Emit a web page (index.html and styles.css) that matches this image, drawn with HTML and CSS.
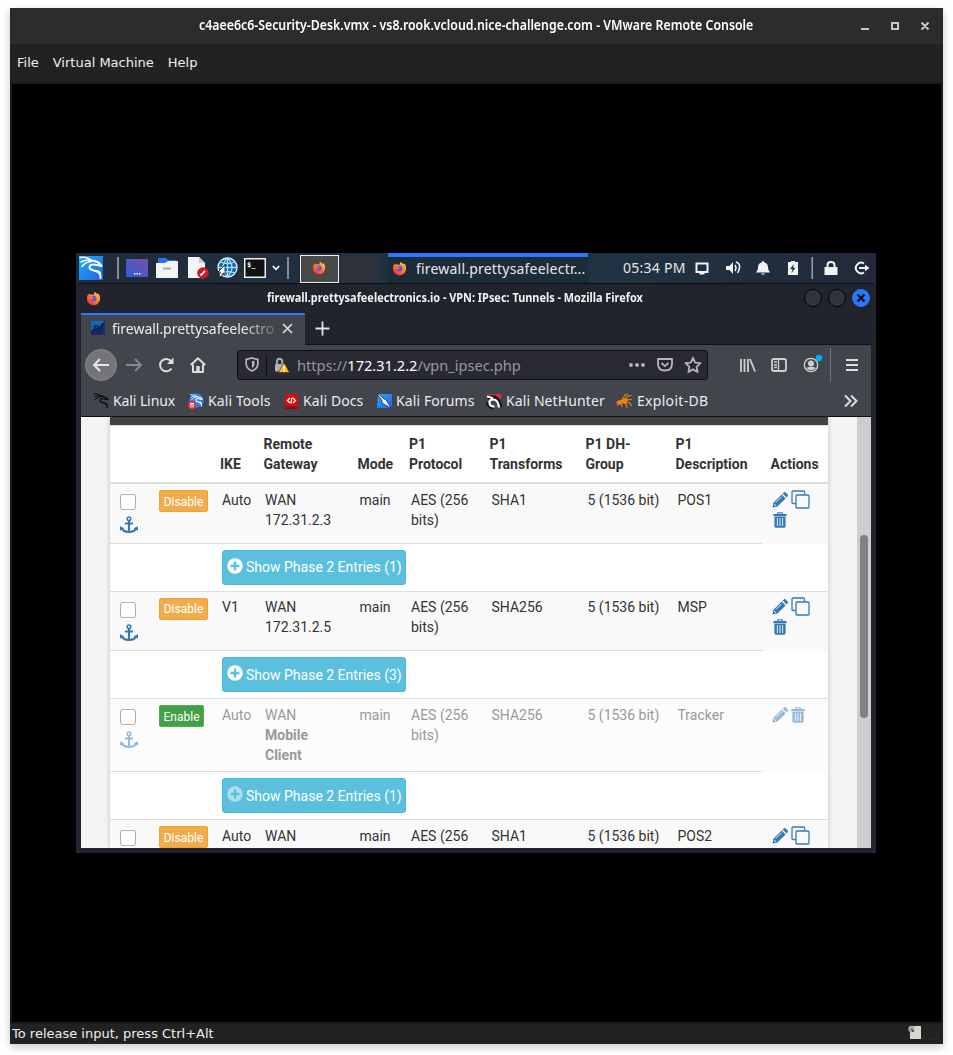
FILE: index.html
```
<!DOCTYPE html>
<html lang="en">
<head>
<meta charset="utf-8">
<title>VMware Remote Console</title>
<link rel="stylesheet" href="styles.css">
</head>
<body>
<svg class="defs" width="0" height="0">
  <defs>
    <linearGradient id="gBlue" x1="0" y1="0" x2="1" y2="1"><stop offset="0" stop-color="#1fb0f6"/><stop offset="1" stop-color="#2360e8"/></linearGradient>
    <linearGradient id="gDesk" x1="0" y1="1" x2="1" y2="0"><stop offset="0" stop-color="#2c5fd6"/><stop offset="1" stop-color="#7b4fa8"/></linearGradient>
    <linearGradient id="gFox" x1="1" y1="0" x2="0.2" y2="1"><stop offset="0" stop-color="#ffe14a"/><stop offset=".45" stop-color="#ff8a2a"/><stop offset="1" stop-color="#f5274f"/></linearGradient>
    <symbol id="fox" viewBox="0 0 16 16">
      <path fill="url(#gFox)" d="M9.500.8c.6 1.200 2 1.800 3 2.700l.6-.9c1.400 1.500 2 3.300 1.900 5.400A7 7 0 0 1 1 8.400C.9 6.200 1.600 4.300 2.700 2.900l.5 1.300 1.100-1.700.7 1.500c1.200-.3 2.300-.2 3.200.2C8.300 2.800 8.700 1.700 9.500.8z"/>
      <path fill="#5a54e6" d="M5.200 6.500l1.700-.3 1.300-1.300c1.800.3 3 1.700 3 3.400a3.300 3.300 0 0 1-6.500.4c.7.500 1.700.5 2.300-.1.700-.6 1.500-.5 1.700-1-.9-.9-2.200-.5-3.500-1.100z"/>
    </symbol>
    <symbol id="dragon" viewBox="0 0 24 24">
      <path fill="none" stroke="currentColor" stroke-width="1.500" stroke-linecap="round" d="M1 1.500c4-.5 8 0 11.500 3M2 6c3.500-2 7-2.300 10.500-1M3 10.500c2-3 5.500-4.500 9.500-5"/>
      <path fill="none" stroke="currentColor" stroke-width="2" stroke-linecap="round" stroke-linejoin="round" d="M12 4.500c3 0 5 1.200 7.500 2L22.500 10l-5-1c-3-1.200-7-.5-7 2.300 0 3.200 4 2.700 7.500 4.200 2.700 1.200 3.700 3.500 3.500 6.500M16 14.800c2-.2 4 .2 5 2"/>
    </symbol>
    <symbol id="pencil" viewBox="0 0 16 16"><path fill="currentColor" d="M.4 15.600l1.100-4.900L9.700 2.500l3.900 3.900-8.200 8.200zM10.600 1.600L11.900.4c.5-.5 1.200-.5 1.700 0l2.100 2.100c.5.500.5 1.200 0 1.700l-1.200 1.300z"/><path stroke="#f9f9f9" stroke-width=".9" d="M3.800 10.500L9.600 4.700M2 12l2 2"/></symbol>
    <symbol id="trash" viewBox="0 0 14 16"><path fill="currentColor" fill-rule="evenodd" d="M4.200 2V.8Q4.200.2 4.800.2h4.400q.6 0 .6.600V2h3.800v2H.4V2zm1.200 0h3.200v-.7H5.400zM1.400 4.600h11.200V14q0 1.700-1.500 1.700H2.900q-1.500 0-1.500-1.700z"/><path stroke="#f9f9f9" stroke-width=".9" d="M4.400 6v8M7 6v8M9.600 6v8"/></symbol>
    <symbol id="copy" viewBox="0 0 19 19"><path fill="none" stroke="currentColor" stroke-width="1.300" d="M4.500 13.500H2Q1 13.500 1 12.500V2Q1 1 2 1h10.500q1 0 1 1v2.500"/><rect x="5" y="5" width="13" height="13" rx="1" fill="none" stroke="currentColor" stroke-width="1.300"/></symbol>
    <symbol id="anchor" viewBox="0 0 18 18"><path fill="none" stroke="currentColor" stroke-width="2.100" d="M9 5v11.500M5 7.500h8M2 11.500c.4 3 3.500 4.500 7 4.500s6.600-1.500 7-4.500"/><circle cx="9" cy="2.700" r="1.800" fill="none" stroke="currentColor" stroke-width="1.500"/><path fill="currentColor" d="M0 14.500V10l4.400 3.200zM18 14.500V10l-4.400 3.200z"/></symbol>
    <symbol id="plus" viewBox="0 0 16 16"><circle cx="8" cy="8" r="7.700" fill="currentColor"/><path stroke="#5bc0de" stroke-width="2.400" d="M8 3.600v8.800M3.600 8h8.800"/></symbol>
  </defs>
</svg>

<main class="console">
  <header class="titlebar">
    <span class="title"><span class="squeeze">c4aee6c6-Security-Desk.vmx - vs8.rook.vcloud.nice-challenge.com - VMware Remote Console</span></span>
    <svg class="winbtns" width="72" height="12" viewBox="0 0 72 12"><path fill="#c8c8c8" d="M1 8h8v2H1z"/><path fill="none" stroke="#c8c8c8" stroke-width="2" d="M32 3h6v6h-6zM61.500 2.500l7 7M68.500 2.500l-7 7"/></svg>
  </header>
  <nav class="menubar"><span>File</span><span>Virtual Machine</span><span>Help</span></nav>

  <section class="screen">
    <div class="guest">
      <div class="panel">
        <svg class="p-kali" width="24" height="24" viewBox="0 0 24 24"><rect width="24" height="24" fill="url(#gBlue)"/><use href="#dragon" width="24" height="24" color="#fff"/></svg>
        <i class="sep"></i>
        <svg class="p-desk" width="22" height="18"><rect width="22" height="18" fill="url(#gDesk)"/><path fill="#fff" d="M8 14h1.500v1.500H8zM10.500 14H12v1.500h-1.500zM13 14h1.500v1.500H13z"/></svg>
        <svg class="p-files" width="22" height="20"><path fill="#2474f5" d="M2 0h8l2 2h8v8H2z"/><path fill="#f4f4f4" d="M0 5h9l3-2h10v17H0z"/><path stroke="#aaa" stroke-width="2" d="M7 10.500h8"/></svg>
        <svg class="p-edit" width="21" height="22"><path fill="#f4f4f4" d="M0 0h11l6 6v15H0z"/><path fill="#c9c9c9" d="M11 0v6h6z"/><circle cx="15" cy="16" r="5.800" fill="#d31822"/><path stroke="#fff" stroke-width="1.800" d="M12.500 18.500l4.500-4.500"/></svg>
        <svg class="p-web" width="21" height="22"><circle cx="10.500" cy="10.500" r="9.500" fill="#10669e" stroke="#dff4ff" stroke-width="1.300"/><path fill="none" stroke="#9fe0ff" stroke-width="1.300" d="M1 10.500h19M10.500 1v19M3 5q7.500 3 15 0M3 16q7.500-3 15 0M10.500 1q-9 9.500 0 19M10.500 1q9 9.500 0 19"/><path fill="#fff" stroke="#111" stroke-width=".8" d="M8 8v9.500l-2-1.500-2 4-2-1.500 1.500-3.500H1z"/></svg>
        <svg class="p-term" width="22" height="20"><rect x=".75" y=".75" width="20.500" height="18.500" fill="#111" stroke="#eee" stroke-width="1.500"/><text x="3" y="9" class="prompt">$_</text></svg>
        <svg class="p-chev" width="8" height="6"><path fill="none" stroke="#fff" stroke-width="1.600" d="M.8 1L4 4.300 7.200 1"/></svg>
        <i class="sep two"></i>
        <span class="launch"><svg width="14" height="14"><use href="#fox" width="14" height="14"/></svg></span>
        <span class="task"><svg width="15" height="15"><use href="#fox" width="15" height="15"/></svg><span>firewall.prettysafeelectr...</span></span>
        <span class="clock">05:34 PM</span>
        <svg class="tray" width="176" height="24" viewBox="0 0 176 24" fill="#f2f2f2">
          <path fill="none" stroke="#f2f2f2" stroke-width="2" d="M2.500 7.500h11v8.500h-11z"/><path d="M5.500 16h5v2.500h-5z"/>
          <path d="M32 10h3.500L39 6v12l-3.500-4H32z"/><path fill="none" stroke="#f2f2f2" stroke-width="1.500" d="M41 9q2 3 0 6M42 6q6.500 2 1.500 11"/>
          <path d="M62 16.500q2-2 2-5 0-4.500 4-5.300Q68 5 69 5t1 1.200q4 .8 4 5.300 0 3 2 5zM67 17.500h4q-2 2.400-4 0z"/>
          <path fill-rule="evenodd" d="M94 6h3V5h4v1h3v13H94zm6 2l-4 5h2.500l-1 4 4-5.200H99z"/>
          <path fill="#99a0aa" d="M117.500 1h1.500v22h-1.500z"/>
          <path d="M130.500 11h13v8h-13z"/><path fill="none" stroke="#f2f2f2" stroke-width="2" d="M133.500 12V9q0-3 3.500-3t3.500 3v3"/>
          <path fill="none" stroke="#f2f2f2" stroke-width="2" d="M170 7.500a5.300 5.300 0 1 0 0 9M165 12h8"/><path d="M171 8.800l4.500 3.200-4.500 3.200z"/>
        </svg>
      </div>

      <div class="browser">
        <div class="fx-title">
          <svg width="15" height="15"><use href="#fox" width="15" height="15"/></svg>
          <span class="fx-name"><span>firewall.prettysafeelectronics.io - VPN: IPsec: Tunnels - Mozilla Firefox</span></span>
          <span class="rounds"><i></i><i></i><i class="close"><svg width="10" height="10"><path stroke="#10131c" stroke-width="2.400" d="M1.500 1.500l7 7M8.500 1.500l-7 7"/></svg></i></span>
        </div>
        <div class="tabs">
          <div class="tab">
            <svg width="14" height="14"><rect width="14" height="14" fill="#1b2a78"/><path fill="#0d6bb5" d="M0 0h13L9 6 0 9z"/><path fill="none" stroke="#162043" stroke-width="1.700" d="M2 13l2-8h2q1.500 0 1 2T5 9H4M8 13l2-8q.6-2 3-1.500M8.500 7H12"/></svg>
            <span class="tab-name">firewall.prettysafeelectro</span>
            <svg width="11" height="11"><path stroke="#dedee0" stroke-width="1.700" d="M1 1l9 9M10 1l-9 9"/></svg>
          </div>
          <svg class="newtab" width="15" height="15"><path stroke="#e2e2e4" stroke-width="1.800" d="M7.500 .5v14M.5 7.500h14"/></svg>
        </div>
        <div class="navbar">
          <span class="back"><svg width="18" height="14"><path fill="none" stroke="#e6e6e6" stroke-width="2" d="M17 7H2M8 1L2 7l6 6"/></svg></span>
          <svg class="fwd" width="17" height="14"><path fill="none" stroke="#85888d" stroke-width="2" d="M0 7h15M9 1l6 6-6 6"/></svg>
          <svg class="reload" width="16" height="16"><path fill="none" stroke="#dedede" stroke-width="2" d="M13.500 11.500A6.200 6.200 0 1 1 13 4"/><path fill="#dedede" d="M15.500.5V7H9z"/></svg>
          <svg class="home" width="16" height="16"><path fill="none" stroke="#dedede" stroke-width="2" stroke-linejoin="round" d="M.8 8L8 1.300 15.200 8M3 7.500V15h10V7.500"/><path fill="#dedede" d="M6.300 9h3.400v6H6.300z"/></svg>
          <div class="url">
            <svg class="shield" width="14" height="15"><path fill="none" stroke="#b6b6ba" stroke-width="1.700" d="M7 1l5.800 1.500V7q0 4.500-5.800 7-5.800-2.500-5.800-7V2.500z"/><path fill="#b6b6ba" d="M7 4h2.500v4Q9.300 9.500 7 11z"/></svg>
            <i class="bar"></i>
            <svg class="lock" width="16" height="16"><rect x="1" y="7" width="9" height="7.500" rx="1" fill="#b0b0b4"/><path fill="none" stroke="#b0b0b4" stroke-width="1.900" d="M3 8V4.500q0-2.800 2.500-2.800T8.300 4.500V7"/><path fill="#ffbf14" stroke="#282933" stroke-width=".6" d="M10 5.500l5.500 10h-11z"/><path stroke="#fff" stroke-width="1.500" d="M10 9v3M10 13v1.300"/></svg>
            <span class="address">https://<b>172.31.2.2</b>/vpn_ipsec.php</span>
            <svg class="urlicons" width="75" height="18"><g fill="#b6b6ba"><circle cx="3" cy="9" r="1.900"/><circle cx="9" cy="9" r="1.900"/><circle cx="15" cy="9" r="1.900"/></g><path fill="none" stroke="#b6b6ba" stroke-width="1.800" stroke-linejoin="round" d="M30 3h14v5q0 6.500-7 6.500T30 8zM33.500 7l3.500 3.200L40.500 7M65 1.800l2.200 4.800 5.300.6-3.900 3.600 1 5.200-4.600-2.600-4.600 2.600 1-5.200-3.900-3.600 5.300-.6z"/></svg>
          </div>
          <svg class="tools" width="124" height="34" viewBox="0 0 124 34">
            <path stroke="#d0d0d2" stroke-width="1.800" d="M2 11v13M5.500 11v13M9 11v13M11 11l5 12.500"/>
            <rect x="33" y="11" width="14" height="12" rx="2" fill="none" stroke="#d0d0d2" stroke-width="1.800"/><path stroke="#d0d0d2" stroke-width="1.300" d="M39.500 11v12M35 14h3M35 17h3M35 19.500h3"/>
            <circle cx="72" cy="17" r="6.700" fill="none" stroke="#d0d0d2" stroke-width="1.300"/><circle cx="72" cy="15.500" r="3" fill="#d0d0d2"/><path fill="#d0d0d2" d="M67 20q5-2.500 10 0-5 4.500-10 0z"/><circle cx="80" cy="10" r="3.200" fill="#00b0f5"/>
            <path fill="#707379" d="M91 0h1v34h-1z"/><path fill="#dedee0" d="M107 11h12v2h-12zM107 16h12v2h-12zM107 21h12v2h-12z"/>
          </svg>
        </div>
        <div class="bookmarks">
          <svg width="16" height="16"><use href="#dragon" width="16" height="16" color="#0d0e10"/></svg><span class="b1">Kali Linux</span>
          <svg width="16" height="16"><circle cx="8.500" cy="7.500" r="7.200" fill="#2e7cf0"/><use href="#dragon" x="2" y="1" width="13" height="13" color="#fff"/><circle cx="4" cy="12" r="4" fill="#e63238"/><path fill="none" stroke="#fff" d="M2 10.500h4M3 10.500v4M5 10.500v4"/></svg><span class="b2">Kali Tools</span>
          <svg width="14" height="16"><path fill="#d50c12" d="M0 1h13v15H0z"/><path fill="#8c090e" d="M0 13.500h13V16H0z"/><path fill="none" stroke="#fff" stroke-width="1.300" d="M5 5L2.500 7.500 5 10M8 5l2.500 2.500L8 10M7 4.500L6 10.500"/></svg><span class="b3">Kali Docs</span>
          <svg width="16" height="16"><path fill="url(#gBlue)" d="M2 1h14v14H1z"/><path fill="#eef" stroke="#172037" stroke-width=".8" d="M.5.8l3 1 3.500 3.500 3 1.200 2 3.500 3.500 5.200-6-3-3-2-1.500-4z"/></svg><span class="b4">Kali Forums</span>
          <svg width="16" height="16"><path fill="#e22b31" d="M2 1h14l-3 9-4-4z"/><path fill="none" stroke="#15171c" stroke-width="3.600" d="M2 6q5-4 9 0t3 8M2 9q0 5 6 5.500"/><path fill="none" stroke="#fff" stroke-width="2.200" d="M13 14.500Q12 6.500 7.500 6.500T3.500 10q0 3 5 3.700M1 3.500l6 1.500"/></svg><span class="b5">Kali NetHunter</span>
          <svg width="17" height="16"><path fill="#ee8312" d="M1 8l5-1.500 4-1.500 2 2-2 3-4 .5L1 13l1-3.500-2 1.500z"/><path fill="none" stroke="#ee8312" stroke-width="1.100" d="M6 7l3-5 3-1M9 6l3-3 3.500-.5M10 7l6-.5M9 9l5 1 1.500 3M6 9l4 2 1 4M5 10l1 4"/></svg><span class="b6">Exploit-DB</span>
          <svg class="more" width="14" height="14"><path fill="none" stroke="#dedee0" stroke-width="2" d="M1 1.500L6.500 7 1 12.500M7 1.500L12.500 7 7 12.500"/></svg>
        </div>

        <div class="page">
          <div class="box">
            <div class="boxhead"></div>
            <div class="row head"><span></span><span></span><span>IKE</span><span>Remote<br>Gateway</span><span>Mode</span><span>P1<br>Protocol</span><span>P1<br>Transforms</span><span>P1 DH-<br>Group</span><span>P1<br>Description</span><span>Actions</span></div>

            <div class="row r1"><span class="sel"><i class="cb"></i><svg width="18" height="18"><use href="#anchor"/></svg></span><span><b class="btn warn">Disable</b></span><span>Auto</span><span>WAN<br>172.31.2.3</span><span>main</span><span>AES (256<br>bits)</span><span>SHA1</span><span>5 (1536 bit)</span><span>POS1</span><span class="act"><svg width="16" height="16"><use href="#pencil"/></svg><svg width="19" height="19"><use href="#copy"/></svg><svg width="14" height="16"><use href="#trash"/></svg></span></div>
            <div class="more-row"><b class="p2"><svg width="16" height="16"><use href="#plus"/></svg>Show Phase 2 Entries (1)</b></div>

            <div class="row r2"><span class="sel"><i class="cb"></i><svg width="18" height="18"><use href="#anchor"/></svg></span><span><b class="btn warn">Disable</b></span><span>V1</span><span>WAN<br>172.31.2.5</span><span>main</span><span>AES (256<br>bits)</span><span>SHA256</span><span>5 (1536 bit)</span><span>MSP</span><span class="act"><svg width="16" height="16"><use href="#pencil"/></svg><svg width="19" height="19"><use href="#copy"/></svg><svg width="14" height="16"><use href="#trash"/></svg></span></div>
            <div class="more-row low"><b class="p2"><svg width="16" height="16"><use href="#plus"/></svg>Show Phase 2 Entries (3)</b></div>

            <div class="row r3 off"><span class="sel"><i class="cb"></i><svg width="18" height="18"><use href="#anchor"/></svg></span><span><b class="btn ok">Enable</b></span><span>Auto</span><span>WAN<br><strong>Mobile<br>Client</strong></span><span>main</span><span>AES (256<br>bits)</span><span>SHA256</span><span>5 (1536 bit)</span><span>Tracker</span><span class="act"><svg width="16" height="16"><use href="#pencil"/></svg><svg width="14" height="16"><use href="#trash"/></svg></span></div>
            <div class="more-row low dim"><b class="p2"><svg width="16" height="16"><use href="#plus"/></svg>Show Phase 2 Entries (1)</b></div>

            <div class="row r4"><span class="sel"><i class="cb"></i></span><span><b class="btn warn">Disable</b></span><span>Auto</span><span>WAN</span><span>main</span><span>AES (256</span><span>SHA1</span><span>5 (1536 bit)</span><span>POS2</span><span class="act"><svg width="16" height="16"><use href="#pencil"/></svg><svg width="19" height="19"><use href="#copy"/></svg></span></div>
          </div>
          <div class="scroll"><i></i></div>
        </div>
      </div>
    </div>
  </section>

  <footer class="status"><span>To release input, press Ctrl+Alt</span>
    <svg width="30" height="18"><path fill="#d4d8d0" d="M4 2h9v13H2V8z"/><circle cx="3.500" cy="5" r="3.200" fill="#a9ada8"/><path stroke="#30332f" stroke-width="1.300" d="M3.500 5l2 3"/><path fill="#3b3b3b" d="M28 12h1v1h-1zM25 15h1v1h-1zM28 15h1v1h-1zM28 9h1v1h-1zM22 15h1v1h-1z"/></svg>
  </footer>
</main>
</body>
</html>
```

FILE: styles.css
```
* { box-sizing: border-box; }
body { margin: 0; width: 953px; height: 1055px; overflow: hidden; background: #fff; }
svg { display: block; flex: none; }
.defs { position: absolute; }
i { display: block; flex: none; font-style: normal; }
.console { width: 933px; height: 1036px; margin: 8px 0 0 10px; display: flex; flex-direction: column; background: #222; box-shadow: 0 3px 8px rgba(0, 0, 0, .22); font-family: "DejaVu Sans", sans-serif; color: #eee; }

.titlebar { height: 36px; background: #2c2c2c; display: flex; align-items: center; padding-left: 189px; }
.title { width: 661px; white-space: nowrap; font: 600 14px/34px "Noto Sans", sans-serif; color: #fff; margin-top: -2px; }
.squeeze { display: inline-block; transform: scaleX(.881); transform-origin: 0 50%; }
.menubar { height: 38px; padding-left: 7px; display: flex; gap: 14px; font-size: 13px; line-height: 37px; }

.screen { height: 942px; background: #000; border: 2px solid #1a1a1a; padding: 169px 0 0 64px; }
.guest { width: 800px; height: 600px; display: flex; flex-direction: column; background: #10325d; }

.panel { height: 30px; flex: none; display: flex; align-items: center; padding-left: 3px; background: linear-gradient(90deg, #212b3a, #203443 60%, #22293a); font-family: "Noto Sans", sans-serif; font-size: 14px; color: #e8e8ea; white-space: nowrap; }
.sep { width: 2px; height: 22px; background: #838b96; margin: 0 7px 0 14px; }
.p-files { margin-left: 8px; }
.p-edit { margin-left: 10px; }
.p-web { margin-left: 8px; }
.p-term { margin-left: 6px; }
.p-chev { margin-left: 6px; }
.sep.two { margin: 0 11px 0 7px; }
.prompt { font: bold 7px "DejaVu Sans Mono", monospace; fill: #fff; }
.launch { width: 39px; height: 28px; margin: 2px 49px 0 0; flex: none; border: 1px solid #eee; background: #494949; display: flex; align-items: center; justify-content: center; padding: 0 2px 2px 0; box-shadow: 41px 0 0 -1px #2e303b; }
.task { width: 200px; height: 30px; flex: none; border-top: 4px solid #2777ff; background: #1c2c39; display: flex; align-items: center; gap: 9px; padding: 0 0 4px 4px; letter-spacing: .2px; }
.clock { width: 72px; margin: -2px 0 0 35px; letter-spacing: .25px; }
.tray { flex: none; margin-left: -1px; }

.browser { height: 570px; background: #21232d; border-top: 1px solid #0c0d12; border-radius: 5px; padding: 0 5px 5px; font-family: "Noto Sans", sans-serif; display: flex; flex-direction: column; }
.fx-title { height: 29px; flex: none; display: flex; align-items: center; padding: 0 0 1px 5px; }
.fx-name { width: 548px; margin: -2px 0 0 166px; white-space: nowrap; font-size: 12px; font-weight: 700; color: #f3f3f3; }
.fx-name span { display: inline-block; transform: scaleX(.909); transform-origin: 0 50%; }
.rounds { display: flex; gap: 6px; margin-left: -11px; }
.rounds i { width: 18px; height: 18px; border-radius: 50%; border: 1px solid #050608; background: #303441; }
.rounds .close { background: #2777ff; border-color: #2777ff; display: flex; align-items: center; justify-content: center; }
.tabs { height: 32px; flex: none; display: flex; align-items: center; border-bottom: 1px solid #101117; }
.tab { width: 224px; height: 32px; flex: none; border-top: 2px solid #2777ff; background: #42454b; display: flex; align-items: center; padding: 0 12px 3px 10px; gap: 7px; }
.tab-name { width: 164px; overflow: hidden; white-space: nowrap; font-size: 14px; letter-spacing: -.03px; color: #ececee; -webkit-mask-image: linear-gradient(90deg, #000 80%, rgba(0, 0, 0, .2)); mask-image: linear-gradient(90deg, #000 80%, rgba(0, 0, 0, .2)); }
.newtab { margin: -1px 0 0 10px; }
.navbar { height: 41px; flex: none; background: #42454b; display: flex; align-items: center; padding: 0 0 2px 4px; }
.back { width: 32px; height: 32px; flex: none; border-radius: 50%; background: #73757a; border: 1px solid #888a8e; display: flex; align-items: center; justify-content: center; }
.fwd { margin-left: 9px; }
.reload { margin-left: 15px; }
.home { margin-left: 16px; }
.url { width: 471px; height: 30px; flex: none; margin: 0 31px; border: 1px solid #0e0f14; border-radius: 3px; background: #282933; display: flex; align-items: center; padding-left: 7px; }
.bar { width: 1px; height: 22px; background: #0e0f14; margin: 0 7px; }
.address { width: 331px; margin-left: 7px; font-size: 14.600px; white-space: nowrap; color: #96979d; }
.address b { color: #fff; font-weight: 400; }
.bookmarks { height: 31px; flex: none; background: #42454b; border-bottom: 1px solid #0f1013; display: flex; align-items: center; gap: 4px; padding: 0 0 1px 12px; font-size: 14px; letter-spacing: .1px; color: #ececee; white-space: nowrap; }
.b1 { width: 71px; letter-spacing: -.1px; }
.b2 { width: 73px; }
.b3 { width: 69px; }
.b4 { width: 86px; }
.b5 { width: 106px; }
.b6 { letter-spacing: .3px; }
.more { margin: 0 13px 0 auto; }

.page { height: 431px; flex: none; overflow: hidden; background: #f4f4f4; display: flex; padding-left: 29px; font: 14px/20px Roboto, sans-serif; color: #333; }
.box { width: 718px; flex: none; background: #fff; box-shadow: 0 0 5px rgba(0, 0, 0, .22); }
.boxhead { height: 8px; background: #424242; }
.row { display: grid; grid-template-columns: 39px 63px 43px 94.500px 51.500px 80.500px 96px 90px 84px 66px; padding-left: 10px; white-space: nowrap; background: #f9f9f9; }
.row.head { height: 59px; border-top: 1px solid #ddd; border-bottom: 2px solid #ddd; background: #fff; font-weight: 700; padding: 0 0 8px 8px; align-items: end; grid-template-columns: 39px 63px 43.500px 94px 51.500px 80.500px 96px 90px 95px 56px; }
.r1 { height: 60px; }
.r2 { height: 59px; }
.r3 { height: 73px; }
.r4 { height: 40px; }
.r1, .r2, .r3 { background: linear-gradient(#ddd, #ddd) 0 100% / 652px 1px no-repeat #f9f9f9; }
.row:not(.head) > span { padding-top: 6px; }
.row.r2:not(.head) > span { padding-top: 5px; }
.off > span { color: #999; }
.off .sel svg, .off .act svg { opacity: .5; }
.off { background-color: #fcfcfc; }
.cb { width: 16px; height: 16px; margin: 4px 0 6px; background: #fff; border: 1px solid #b5aca4; border-radius: 3px; }
.sel svg { color: #337ab7; }
.btn { display: block; width: 49px; height: 22px; border: 1px solid #eea236; border-radius: 2px; background: #f0ad4e; color: #fff; font: 12px/22px Roboto, sans-serif; text-align: center; }
.btn.ok { width: 45px; background: #43a047; border-color: #4cae4c; }
.r2 .btn { margin-top: 1px; line-height: 21px; }
.r2 .cb { margin-top: 5px; }
.row > .act { display: flex; flex-wrap: wrap; align-content: flex-start; column-gap: 3px; padding: 0 14px 0 10px; color: #337ab7; }
.act svg:first-child { margin-top: 2px; }
.act svg:nth-child(3) { margin: 3px 0 0 1px; }
.off .act svg:nth-child(2) { margin-top: 2px; }
.more-row { height: 48px; border-bottom: 1px solid #ddd; padding: 6px 0 0 112px; background: #fff; }
.p2 { width: 184px; height: 35px; border: 1px solid #46b8da; border-radius: 3px; background: #5bc0de; color: #fff; font: 14px/33px Roboto, sans-serif; display: flex; gap: 3px; padding-left: 4px; white-space: nowrap; }
.low .p2 { line-height: 35px; }
.p2 svg { margin-top: 7px; }
.dim .p2 svg { opacity: .5; }
.scroll { width: 14px; margin-left: 29px; background: #cdcdcd; padding: 118px 0 0 3px; }
.scroll i { width: 8px; height: 183px; border-radius: 4px; background: #7e8281; }

.status { height: 20px; display: flex; justify-content: space-between; align-items: center; padding: 0 5px 1px 2px; font-size: 13px; border-bottom: 1px solid #2a202a; }
```
